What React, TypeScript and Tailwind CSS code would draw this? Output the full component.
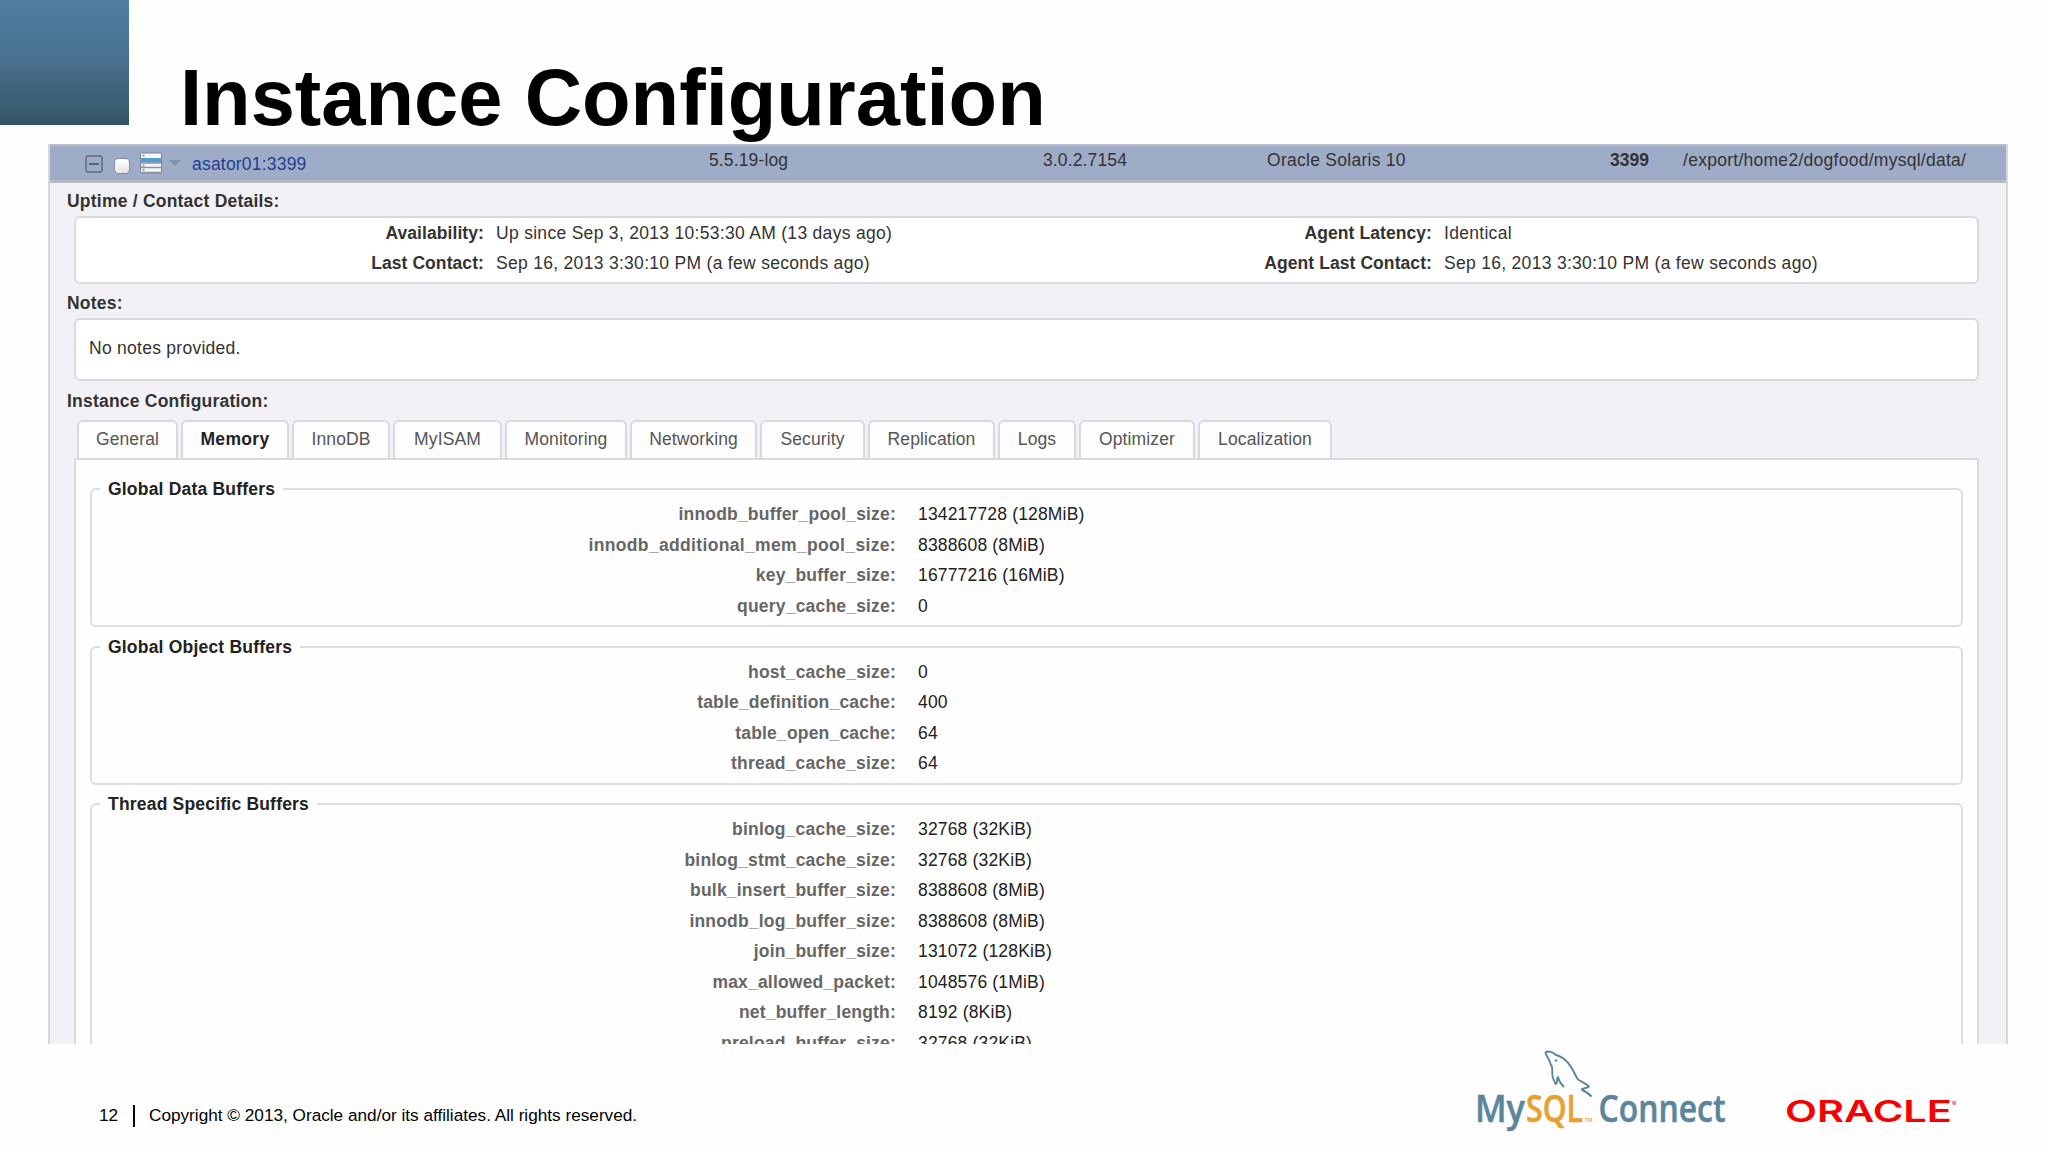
import { FunctionComponent, ReactNode } from "react";

const tabs = [
  { text: "General", className: "w-[101px]" },
  { text: "Memory", className: "w-[108px]", active: true },
  { text: "InnoDB", className: "w-[98px]" },
  { text: "MyISAM", className: "w-[109px]" },
  { text: "Monitoring", className: "w-[122px]" },
  { text: "Networking", className: "w-[127px]" },
  { text: "Security", className: "w-[105px]" },
  { text: "Replication", className: "w-[127px]" },
  { text: "Logs", className: "w-[78px]" },
  { text: "Optimizer", className: "w-[116px]" },
  { text: "Localization", className: "w-[134px]" }
]

const groups = [
  {
    title: "Global Data Buffers",
    rows: [
      { key: "innodb_buffer_pool_size", value: "134217728 (128MiB)" },
      { key: "innodb_additional_mem_pool_size", value: "8388608 (8MiB)", wide: true },
      { key: "key_buffer_size", value: "16777216 (16MiB)" },
      { key: "query_cache_size", value: "0" }
    ]
  },
  {
    title: "Global Object Buffers",
    rows: [
      { key: "host_cache_size", value: "0" },
      { key: "table_definition_cache", value: "400" },
      { key: "table_open_cache", value: "64" },
      { key: "thread_cache_size", value: "64" }
    ]
  },
  {
    title: "Thread Specific Buffers",
    rows: [
      { key: "binlog_cache_size", value: "32768 (32KiB)" },
      { key: "binlog_stmt_cache_size", value: "32768 (32KiB)" },
      { key: "bulk_insert_buffer_size", value: "8388608 (8MiB)" },
      { key: "innodb_log_buffer_size", value: "8388608 (8MiB)" },
      { key: "join_buffer_size", value: "131072 (128KiB)" },
      { key: "max_allowed_packet", value: "1048576 (1MiB)" },
      { key: "net_buffer_length", value: "8192 (8KiB)" },
      { key: "preload_buffer_size", value: "32768 (32KiB)" }
    ]
  }
]

const ServerIcon: FunctionComponent = () => (
  <svg width="24" height="22" viewBox="0 0 24 22" className="ml-[9px] -mt-px">
    <rect x="1.5" y="1" width="21" height="20" rx="1" fill="#f4f6f8" stroke="#7f8792" />
    <rect x="2" y="6" width="20" height="4.5" fill="#4f9fd8" />
    <path d="M2 11h20M2 15.5h20M2 20.5h20" stroke="#8d949e" strokeWidth="1.4" />
    <path d="M3.500 3.500h2M3.500 8h2M3.500 13.500h2M3.500 18h2" stroke="#7d8894" strokeWidth="1.400" />
  </svg>
)

const SectionTitle: FunctionComponent<{ children: ReactNode, className: string }> = ({ children, className }) => (
  <h2 className={`flex items-center pl-[17px] font-bold tracking-[0.22px] text-[#333333] ${className}`}>{children}</h2>
)

const Detail: FunctionComponent<{ label: string, value: string }> = ({ label, value }) => (
  <div className="flex h-[30px] items-center">
    <span className="w-[408px] text-right font-bold tracking-[0.08px]">{label}</span>
    <span className="ml-3 tracking-[0.3px]">{value}</span>
  </div>
)

const InstanceHeader: FunctionComponent = () => (
  <div className="flex h-[39px] border-t-2 border-b-[3px] border-t-[#b9bfca] border-b-[#b8bac8] bg-[#9facc8] text-[#333333]">
    <div className="flex w-[659px] items-center pl-[35px]">
      <span className="mt-px flex h-[18px] w-[18px] items-center justify-center rounded-[3px] border-2 border-[#6d7a92]">
        <span className="h-0.5 w-2.5 bg-[#59657c]" />
      </span>
      <span className="mt-[5px] ml-[11px] h-4 w-4 rounded-[4px] border border-[#848c9b] bg-linear-to-b from-white to-[#e3e5e6]" />
      <ServerIcon />
      <svg width="12" height="6" viewBox="0 0 12 6" className="ml-1.5"><path d="M0 0h12L6 6z" fill="#8490a4" /></svg>
      <span className="mt-0.5 ml-[11px] tracking-[0.2px] text-[#1f3e8f]">asator01:3399</span>
    </div>
    <span className="w-[334px] tracking-[0.14px]">5.5.19-log</span>
    <span className="w-[224px] tracking-[0.14px]">3.0.2.7154</span>
    <span className="w-[343px]">Oracle Solaris 10</span>
    <span className="w-[73px] font-bold tracking-normal">3399</span>
    <span>/export/home2/dogfood/mysql/data/</span>
  </div>
)

const MySqlConnectLogo: FunctionComponent = () => (
  <svg width="254" height="84" viewBox="1474 1048 254 84">
    <path
      d="M1591.500 1096.500C1588 1093 1585 1091 1582 1090C1581 1088 1586 1089 1589 1086.500C1585 1083 1582 1082 1578 1079.500C1573 1072 1570 1059 1556 1055C1553 1052 1548 1050.500 1545.500 1052.500C1546 1056 1550 1060 1550.500 1064C1554 1068 1551 1073 1553 1078L1555.500 1084C1558 1084 1556 1079 1558 1077C1559 1082 1561 1084 1564 1087"
      fill="none"
      stroke="#5b859c"
      strokeWidth="1.900"
      strokeLinejoin="round"
    />
    <circle cx="1556" cy="1060.500" r="1.200" fill="#5b859c" />
    <g fontFamily="'Open Sans', 'Noto Sans', sans-serif" fontSize="37" fontWeight="600" strokeWidth="0.500">
      <text x="1475" y="1121.500" fill="#5b859c" stroke="#5b859c" textLength="50" lengthAdjust="spacingAndGlyphs">My</text>
      <text x="1526" y="1121.500" fill="#e8a02f" stroke="#e8a02f" textLength="57" lengthAdjust="spacingAndGlyphs">SQL</text>
      <text x="1584.500" y="1121.500" fill="#e8a02f" fontSize="5.500">TM</text>
      <text x="1598.500" y="1121.500" fill="#5b859c" stroke="#5b859c" textLength="127" lengthAdjust="spacingAndGlyphs">Connect</text>
    </g>
  </svg>
)

const OracleLogo: FunctionComponent = () => (
  <svg width="176" height="32" viewBox="1784 1096 176 32">
    <g fill="#f80000" fontFamily="Inter, 'Liberation Sans', sans-serif">
      <text x="1785" y="1122" fontSize="30" fontWeight="600" textLength="167" lengthAdjust="spacingAndGlyphs">ORACLE</text>
      <text x="1952" y="1106" fontSize="6.500">®</text>
    </g>
  </svg>
)

export default function App() {
  return (
    <div className="flex h-[1152px] w-[2048px] flex-col overflow-hidden bg-[#fdfefd] font-['Liberation_Sans',Arial,sans-serif]">
      <header className="flex h-36 shrink-0">
        <div className="h-[125px] w-[129px] bg-linear-to-b from-[#5080a2] via-[#486f8d] to-[#335566]" />
        <h1 className="mt-[52px] ml-[51px] text-[79.5px] leading-[92px] font-bold whitespace-nowrap text-black">Instance Configuration</h1>
      </header>
      <main className="ml-12 h-[900px] w-[1960px] shrink-0 overflow-hidden border-x-2 border-[#d6d6dc] bg-[#f2f2f6] text-[17.5px] leading-7 tracking-[0.27px] whitespace-nowrap text-[#333333]">
        <InstanceHeader />
        <SectionTitle className="h-[33px] pt-0.5">Uptime / Contact Details:</SectionTitle>
        <section className="mr-[27px] ml-6 flex h-[68px] rounded-md border-2 border-[#d9d9df] bg-white">
          <div className="w-[948px]">
            <Detail label="Availability:" value="Up since Sep 3, 2013 10:53:30 AM (13 days ago)" />
            <Detail label="Last Contact:" value="Sep 16, 2013 3:30:10 PM (a few seconds ago)" />
          </div>
          <div>
            <Detail label="Agent Latency:" value="Identical" />
            <Detail label="Agent Last Contact:" value="Sep 16, 2013 3:30:10 PM (a few seconds ago)" />
          </div>
        </section>
        <SectionTitle className="h-[34px] pt-1">Notes:</SectionTitle>
        <section className="mr-[27px] ml-6 flex h-[63px] items-center rounded-md border-2 border-[#d9d9df] bg-white pb-1 pl-[13px]">No notes provided.</section>
        <SectionTitle className="h-[39px]">Instance Configuration:</SectionTitle>
        <nav className="ml-[27px] flex h-[38px] gap-[3px] tracking-[0.12px]">
          {tabs.map((e) => (
            <div key={e.text} className={`flex shrink-0 items-center justify-center rounded-t-md border-2 border-b-0 border-[#d9d9df] bg-[#fdfdfe] pb-0.5 ${e.className} ${e.active ? "font-bold tracking-[0.35px] text-[#222222]" : "text-[#555555]"}`}>
              {e.text}
            </div>
          ))}
        </nav>
        <section className="mr-[27px] ml-6 border-2 border-[#d9d9df] bg-[#fefefe] px-3.5 pt-[15px]">
          {groups.map((group) => (
            <fieldset key={group.title} className="mb-[5.6px] rounded-md border-2 border-[#dddde1] pb-1">
              <legend className="ml-2 px-2 font-bold tracking-[0.2px] text-[#222222]">{group.title}</legend>
              <div className="-mt-1">
                {group.rows.map((row) => (
                  <div key={row.key} className="flex h-[30.5px] items-center">
                    <span className={`w-[804px] text-right font-bold text-[#666666] ${row.wide ? "tracking-[0.34px]" : "tracking-[0.19px]"}`}>{row.key}:</span>
                    <span className="ml-[22px] tracking-[0.17px] text-[#222222]">{row.value}</span>
                  </div>
                ))}
              </div>
            </fieldset>
          ))}
        </section>
      </main>
      <footer className="flex h-[108px] shrink-0 pl-[99px] text-black">
        <div className="mt-[59px] flex h-[26px] w-[1375px] items-center text-[17.2px]">
          <span className="w-[34px]">12</span>
          <span className="h-[22px] w-0.5 bg-black" />
          <span className="ml-3.5">Copyright © 2013, Oracle and/or its affiliates. All rights reserved.</span>
        </div>
        <div className="mt-1"><MySqlConnectLogo /></div>
        <div className="mt-[52px] ml-14"><OracleLogo /></div>
      </footer>
    </div>
  )
}
